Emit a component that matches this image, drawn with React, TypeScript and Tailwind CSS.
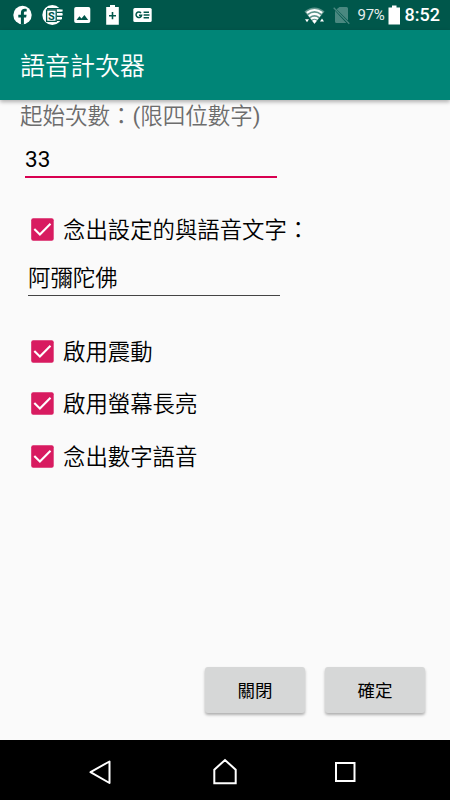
import React from 'react'

const options = [
  { id: 'vibrate', label: '啟用震動' },
  { id: 'screen', label: '啟用螢幕長亮' },
  { id: 'number', label: '念出數字語音' },
]

const StatusBar = () => {
  return (
    <header className="flex h-[30px] shrink-0 items-center justify-between bg-[#00574b] text-white">
      <svg width="160" height="30" viewBox="0 0 160 30" fill="#fff">
        {/* facebook */}
        <circle cx="22.5" cy="15" r="9.2" />
        <path
          d="M20.9 24.5V17.6H18.3V14.7H20.9V12.7C20.9 10.1 22.4 8.8 24.8 8.8C25.8 8.8 26.7 9 26.7 9V11.5H25.4C24.2 11.5 23.9 12.2 23.9 13V14.7H26.6L26.1 17.6H23.9V24.5Z"
          fill="#00574b"
        />
        {/* S badge */}
        <circle cx="52.3" cy="15" r="10" />
        <path d="M47 8.8H64M57 12.2H64M57 16.2H64M57 20.2H64" stroke="#00574b" strokeWidth="1.5" />
        <path d="M57 10.4H62.6M57.5 14.2H62.6M57.5 18.2H62" stroke="#fff" strokeWidth="2" />
        <rect x="46.6" y="10" width="9.6" height="11.4" fill="#fff" stroke="#00574b" strokeWidth="1.3" />
        <text x="51.4" y="19.6" textAnchor="middle" fontFamily="Roboto, sans-serif" fontSize="11" fontWeight="700" fill="#00574b">
          S
        </text>
        {/* image */}
        <path
          fillRule="evenodd"
          d="M76 7H88.5Q90.3 7 90.3 8.8V21.2Q90.3 23 88.5 23H76Q74.2 23 74.2 21.2V8.8Q74.2 7 76 7ZM76.5 20H88.2L84.4 14.9L81.5 18.5L79.4 16.2Z"
        />
        {/* battery saver */}
        <path
          fillRule="evenodd"
          d="M110 5H115V7H118.8V24.8H106.2V7H110ZM111.7 12V14.9H109V16.5H111.7V19.3H113.3V16.5H116V14.9H113.3V12Z"
        />
        {/* news */}
        <rect x="133.3" y="8" width="18.4" height="14" rx="1.5" />
        <path
          d="M141 12.9A2.8 2.8 0 1 0 141.6 15.3H139M143.6 12.3H149M143.6 15H149.5M143.6 17.7H149"
          fill="none"
          stroke="#00574b"
          strokeWidth="1.5"
        />
      </svg>
      <div className="flex items-center pr-[10px]">
        <svg width="48" height="30" viewBox="302 0 48 30" fill="none">
          <path d="M304.5 11.5Q314.5 3.5 324.5 11.5L314.5 24Z" fill="#5f958d" />
          <path d="M306.8 12.9Q314.5 7 322.2 12.9M308.8 16.1Q314.5 11.7 320.2 16.1M311 19Q314.5 16.5 318 19" stroke="#fff" strokeWidth="2" />
          <path d="M312.2 20.7Q314.5 19 316.8 20.7L314.5 23.7Z" fill="#fff" />
          <path d="M305 19.3H309L307 22.3ZM320 21.5H324L322 18.5Z" fill="#fff" />
          <path d="M339.5 7H346.5Q348 7 348 8.5V20.5L336.6 9.2ZM335 10.8V21.5Q335 23 336.5 23H346.3Z" fill="#4a8880" />
          <path d="M333.7 7.7L349.3 23.7" stroke="#4a8880" strokeWidth="1.3" />
        </svg>
        <span className="ml-[8px] w-[28px] text-[15px] leading-[30px] tracking-[-0.3px] whitespace-nowrap text-[#e5eeed]">97%</span>
        <svg className="ml-[2px]" width="12" height="20" viewBox="0 0 12 20" fill="#fff">
          <path d="M4 0.5H8.5V2.5H12V19.5H0.5V2.5H4Z" />
        </svg>
        <span className="ml-[5px] text-[18px] leading-[30px] font-medium">8:52</span>
      </div>
    </header>
  )
}

const Checkbox = ({ label }: { label: string }) => {
  return (
    <label className="flex h-[52.5px] items-center pl-[31px]">
      <svg className="mb-px" width="23" height="23" viewBox="0 0 23 23" fill="none">
        <rect x="0.2" y="0.2" width="22.5" height="22.5" rx="2" fill="#d81b60" />
        <path d="M3.3 11.1L8.9 16.5L19.5 5.7" stroke="#fff" strokeWidth="2.1" />
      </svg>
      <span className="ml-[9px] text-[22.4px] leading-[30px] font-[350]">{label}</span>
    </label>
  )
}

const DialogButton = ({ label }: { label: string }) => {
  return (
    <button className="h-[46px] w-[100px] rounded-[3px] bg-[#d6d7d7] pt-[2px] text-[17.5px] shadow-[0_2px_3px_rgba(0,0,0,0.3)]">
      {label}
    </button>
  )
}

const NavBar = () => {
  return (
    <nav className="h-[60px] shrink-0 bg-black">
      <svg width="450" height="60" viewBox="0 0 450 60" fill="none" stroke="#fff" strokeWidth="2">
        <path d="M109.5 21.5V43L90.5 32.2Z" strokeLinejoin="round" />
        <path d="M214.3 43.3V29.7L225 20L235.7 29.7V43.3Z" />
        <rect x="336" y="23" width="18.5" height="18" />
      </svg>
    </nav>
  )
}

const App = () => {
  return (
    <div className="flex h-[800px] w-[450px] flex-col overflow-hidden bg-[#fafafa] font-['Roboto','Noto_Sans_CJK_TC',sans-serif] text-black">
      <StatusBar />
      <div className="z-10 flex h-[70px] shrink-0 items-center bg-[#008577] pt-1 pl-5 shadow-[0_2px_4px_rgba(0,0,0,0.3)]">
        <h1 className="text-[25px] leading-[36px] font-[350] text-white">語音計次器</h1>
      </div>
      <main className="flex flex-1 flex-col">
        <p className="h-[32px] pl-5 text-[22.5px] leading-[32px] font-[350] text-[#6d6d6d]">
          起始次數：<span className="font-normal">(</span>限四位數字<span className="font-normal">)</span>
        </p>
        <div className="ml-[25px] h-[46px] w-[252px] border-b-2 border-[#d80050] text-[22.5px] leading-[54px]">33</div>
        <div className="mt-[26px]">
          <Checkbox label="念出設定的與語音文字：" />
        </div>
        <div className="ml-[28px] h-[39px] w-[252px] border-b border-[#444] text-[22.4px] leading-[42px] font-[350]">阿彌陀佛</div>
        <div className="mt-[30px]">
          {options.map((option) => (
            <Checkbox key={option.id} label={option.label} />
          ))}
        </div>
        <div className="mt-auto flex justify-end gap-5 pr-[25px] pb-[27px]">
          <DialogButton label="關閉" />
          <DialogButton label="確定" />
        </div>
      </main>
      <NavBar />
    </div>
  )
}

export default App
